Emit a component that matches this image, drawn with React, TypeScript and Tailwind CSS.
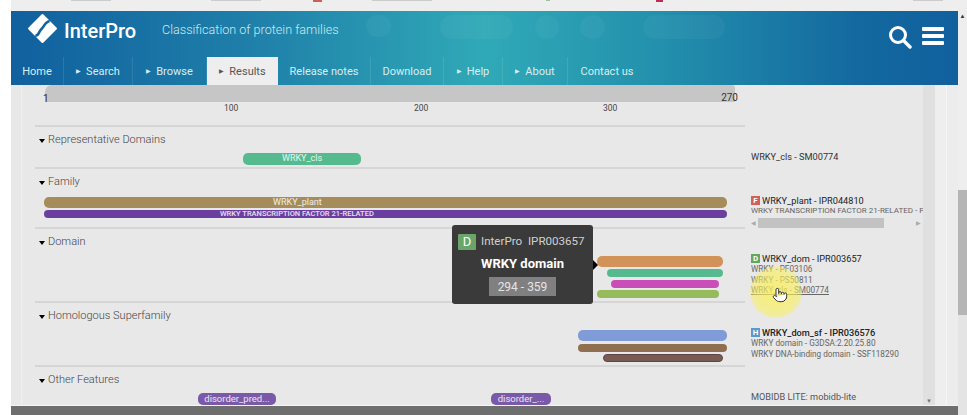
import type { ReactNode } from "react"
import { Pointer } from "lucide-react"

const sans = "font-['Roboto',sans-serif]"

function NavItem({ label, width, arrow, active }: { label: string; width: string; arrow?: boolean; active?: boolean }) {
  return (
    <div
      className={`${width} h-full pt-[2px] flex items-center justify-center gap-[5px] text-[11px] ${
        active ? "bg-[#eeeeee] text-[#555555]" : "border-r border-white/10 text-[#d6eef2]"
      }`}
    >
      {arrow && <span className="mb-[2px] text-[6px] leading-none">▶</span>}
      {label}
    </div>
  )
}

function SectionLabel({ children }: { children: ReactNode }) {
  return (
    <div className="h-[26px] pt-[1px] flex items-center pl-[4px] gap-[3px] text-[11px] font-light text-[#444444]">
      <span className="w-0 h-0 border-x-[3.5px] border-x-transparent border-t-[4px] border-t-black" />
      {children}
    </div>
  )
}

function Bar({ className, children }: { className: string; children?: ReactNode }) {
  return (
    <div className={`${className} flex items-center overflow-hidden whitespace-nowrap text-white/85`}>
      {children}
    </div>
  )
}

function Badge({ letter, color }: { letter: string; color: string }) {
  return (
    <span className={`${color} w-[9px] h-[9px] flex items-center justify-center text-[8px] font-bold leading-none text-white`}>
      {letter}
    </span>
  )
}

function SideTitle({ letter, color, children }: { letter: string; color: string; children: ReactNode }) {
  return (
    <div className="flex items-center gap-[2px] h-[11px] text-[9.2px] text-[#222222] whitespace-nowrap">
      <Badge letter={letter} color={color} />
      {children}
    </div>
  )
}

function SideLine({ children, underline }: { children: ReactNode; underline?: boolean }) {
  return (
    <div className={`h-[10.5px] leading-[10.5px] text-[8.2px] text-[#666666] whitespace-nowrap ${underline ? "underline" : ""}`}>
      {children}
    </div>
  )
}

export default function App() {
  return (
    <div className={`${sans} relative w-[967px] h-[415px] overflow-hidden bg-white`}>
      {/* browser strip */}
      <div className="h-[11px] bg-[#eeeeee] flex items-start ml-[11px]">
        <span className="ml-[60px] w-[40px] h-[1px] bg-[#cccccc]" />
        <span className="ml-[100px] w-[50px] h-[1px] bg-[#cccccc]" />
        <span className="ml-[52px] w-[9px] h-[2px] bg-[#c9605a]" />
        <span className="ml-[50px] w-[60px] h-[1px] bg-[#cccccc]" />
        <span className="ml-[114px] w-[4px] h-[1px] bg-[#9fc09f]" />
        <span className="ml-[106px] w-[7px] h-[2px] bg-[#b8305a]" />
        <span className="ml-[250px] w-[30px] h-[1px] bg-[#cccccc]" />
      </div>

      <div className="flex h-[404px]">
        <div className="w-[11px] shrink-0 bg-white" />

        <div className="w-[947px] flex flex-col">
          {/* header */}
          <header className="relative h-[74px] shrink-0 bg-[linear-gradient(90deg,#10609e_0%,#1f7fa9_25%,#30a9b7_50%,#2391ad_68%,#13689f_90%,#10609e_100%)]">
            <span className="absolute left-[355px] top-[4px] w-[25px] h-[22px] rounded-full bg-white/[0.04]" />
            <span className="absolute left-[429px] top-[4px] w-[73px] h-[24px] rounded-full bg-white/[0.04]" />
            <span className="absolute left-[524px] top-[4px] w-[24px] h-[24px] rounded-full bg-white/[0.04]" />
            <span className="absolute left-[569px] top-[4px] w-[25px] h-[24px] rounded-full bg-white/[0.04]" />
            <span className="absolute left-[632px] top-[4px] w-[82px] h-[24px] rounded-full bg-white/[0.04]" />

            <div className="h-[46px] flex items-center pl-[16px]">
              <svg width="31" height="31" viewBox="0 0 30 30" className="shrink-0 mb-[11px]">
                <path d="M15 2 L28 15 L15 28 L2 15 Z" fill="#ffffff" stroke="#ffffff" strokeWidth="2" strokeLinejoin="round" />
                <path d="M8 22 C12 22 11 18 14 15.5 C17 12.5 18 8 22 8" fill="none" stroke="#11639f" strokeWidth="2.6" />
              </svg>
              <span className="ml-[6px] mb-[7px] w-[98px] text-[20px] leading-none font-medium text-white">InterPro</span>
              <span className="mb-[7px] text-[12.6px] font-light text-[#cdeaf0]">Classification of protein families</span>
              <svg width="24" height="24" viewBox="0 0 24 24" className="ml-auto mr-[10px] mt-[5px] shrink-0">
                <circle cx="10" cy="10" r="7.5" fill="none" stroke="#ffffff" strokeWidth="3" />
                <path d="M15.5 15.5 L22 22" stroke="#ffffff" strokeWidth="3.4" strokeLinecap="round" />
              </svg>
              <div className="mr-[14px] mt-[3px] w-[22px] flex flex-col gap-[3px]">
                <span className="h-[4px] rounded-[1px] bg-white" />
                <span className="h-[4px] rounded-[1px] bg-white" />
                <span className="h-[4px] rounded-[1px] bg-white" />
              </div>
            </div>
            <nav className="h-[28px] flex">
              <NavItem label="Home" width="w-[53px]" />
              <NavItem label="Search" width="w-[69px]" arrow />
              <NavItem label="Browse" width="w-[74px]" arrow />
              <NavItem label="Results" width="w-[71px]" arrow active />
              <NavItem label="Release notes" width="w-[93px]" />
              <NavItem label="Download" width="w-[73px]" />
              <NavItem label="Help" width="w-[59px]" arrow />
              <NavItem label="About" width="w-[65px]" arrow />
              <div className="w-[78px] pt-[2px] flex items-center justify-center text-[11px] text-[#d6eef2]">Contact us</div>
            </nav>
          </header>

          {/* content */}
          <div className="relative flex-1 min-h-0 flex bg-[#e8e8e8] overflow-hidden">
            <div className="w-[11px] shrink-0 border-r border-[#f0f0f0]" />
            <div className="w-[13px] shrink-0" />

            <div className="w-[888px] shrink-0">
              {/* ruler */}
              <div className="flex h-[42px]">
                <div className="relative w-[710px] h-[42px] border-b-2 border-[#d6d6d6]">
                  <div className="ml-[10px] w-[690px] h-[17px] rounded-tl-[7px] rounded-tr-[3px] bg-[#c6c6c6]" />
                  <span className="absolute left-[8px] top-[6px] text-[10px] text-[#333333]">1</span>
                  <span className="absolute right-[7px] top-[5px] text-[10px] text-[#333333]">270</span>
                  <div className="absolute left-[189px] top-[17px] text-[8.5px] text-[#444444]">100</div>
                  <div className="absolute left-[379px] top-[17px] text-[8.5px] text-[#444444]">200</div>
                  <div className="absolute left-[568px] top-[17px] text-[8.5px] text-[#444444]">300</div>
                </div>
              </div>

              {/* Representative Domains */}
              <div className="flex h-[42px]">
                <div className="w-[710px] border-b-2 border-[#d6d6d6]">
                  <SectionLabel>Representative Domains</SectionLabel>
                  <Bar className="ml-[208px] w-[118px] h-[12px] rounded-[5px] bg-[#55bb8f] text-[9px] justify-center">WRKY_cls</Bar>
                </div>
                <div className="flex-1 pl-[6px] pt-[23px] text-[9.2px] text-[#333333]">WRKY_cls - SM00774</div>
              </div>

              {/* Family */}
              <div className="flex h-[60px]">
                <div className="w-[710px] border-b-2 border-[#d6d6d6]">
                  <SectionLabel>Family</SectionLabel>
                  <Bar className="ml-[9px] mt-[2px] w-[683px] h-[11px] pl-[229px] rounded-[5px] bg-[#a58c5a] text-[9px]">WRKY_plant</Bar>
                  <Bar className="ml-[9px] mt-[2px] w-[683px] h-[8px] pl-[176px] rounded-[4px] bg-[#6b3fa0] text-[7.5px] font-medium">
                    WRKY TRANSCRIPTION FACTOR 21-RELATED
                  </Bar>
                </div>
                <div className="flex-1 min-w-0 overflow-hidden pl-[6px] pt-[26px]">
                  <SideTitle letter="F" color="bg-[#d0605a]">WRKY_plant - IPR044810</SideTitle>
                  <div className="h-[10.5px] leading-[10.5px] text-[8px] text-[#666666] whitespace-nowrap">
                    WRKY TRANSCRIPTION FACTOR 21-RELATED - P
                  </div>
                  <div className="mt-[1px] flex items-center h-[10px] text-[6px] text-[#aaaaaa]">
                    <span className="w-[7px]">◀</span>
                    <span className="w-[126px] h-[10px] bg-[#c2c2c2]" />
                    <span className="ml-[32px]">▶</span>
                  </div>
                </div>
              </div>

              {/* Domain */}
              <div className="flex h-[74px]">
                <div className="w-[710px] border-b-2 border-[#d6d6d6]">
                  <SectionLabel>Domain</SectionLabel>
                  <Bar className="ml-[562px] mt-[1px] w-[126px] h-[11px] rounded-[5px] bg-[#d2935a]" />
                  <Bar className="ml-[572px] mt-[2px] w-[116px] h-[8px] rounded-[4px] bg-[#55bb8f]" />
                  <Bar className="ml-[576px] mt-[3px] w-[108px] h-[8px] rounded-[4px] bg-[#c94fb8]" />
                  <Bar className="ml-[562px] mt-[2px] w-[122px] h-[8px] rounded-[4px] bg-[#96bb5c]" />
                </div>
                <div className="flex-1 pl-[6px] pt-[24px]">
                  <SideTitle letter="D" color="bg-[#60a860]">WRKY_dom - IPR003657</SideTitle>
                  <SideLine>WRKY - PF03106</SideLine>
                  <SideLine>WRKY - PS50811</SideLine>
                  <SideLine underline>WRKY_cls - SM00774</SideLine>
                </div>
              </div>

              {/* Homologous Superfamily */}
              <div className="flex h-[64px]">
                <div className="w-[710px] border-b-2 border-[#d6d6d6]">
                  <SectionLabel>Homologous Superfamily</SectionLabel>
                  <Bar className="ml-[543px] mt-[1px] w-[149px] h-[11px] rounded-[5px] bg-[#7f9bd8]" />
                  <Bar className="ml-[543px] mt-[3px] w-[149px] h-[8px] rounded-[4px] bg-[#8f6f50]" />
                  <Bar className="ml-[568px] mt-[2px] w-[120px] h-[8px] rounded-[4px] bg-[#7a5a55] border border-[#5f4542]" />
                </div>
                <div className="flex-1 pl-[6px] pt-[24px]">
                  <SideTitle letter="H" color="bg-[#5a9ac8]">
                    <span className="font-medium">WRKY_dom_sf - IPR036576</span>
                  </SideTitle>
                  <SideLine>WRKY domain - G3DSA:2.20.25.80</SideLine>
                  <SideLine>WRKY DNA-binding domain - SSF118290</SideLine>
                </div>
              </div>

              {/* Other Features */}
              <div className="flex h-[38px]">
                <div className="w-[710px]">
                  <SectionLabel>Other Features</SectionLabel>
                  <div className="flex">
                    <Bar className="ml-[163px] w-[78px] h-[12px] rounded-[5px] bg-[#7a5aa8] text-[9.5px] justify-center">disorder_pred...</Bar>
                    <Bar className="ml-[215px] w-[60px] h-[12px] rounded-[5px] bg-[#7a5aa8] text-[9.5px] justify-center">disorder_...</Bar>
                  </div>
                </div>
                <div className="flex-1 pl-[6px] pt-[23px] text-[9.2px] text-[#555555]">MOBIDB LITE: mobidb-lite</div>
              </div>
            </div>

            {/* inner scrollbar and page gutter */}
            <div className="w-[12px] shrink-0 bg-[#e0e0e0] flex flex-col justify-end items-center text-[6px] text-[#777777]">▼</div>
            <div className="w-[12px] shrink-0 bg-[#eeeeee] border-r border-[#f6f6f6]" />
            <div className="flex-1 bg-[#ececec]" />

            {/* tooltip */}
            <div className="absolute left-[441px] top-[140px] w-[141px] h-[79px] rounded-[3px] bg-[#3a3a3a] flex flex-col items-center">
              <div className="w-full flex items-center pl-[6px] pt-[8px] gap-[5px] text-[11.6px] text-[#d0d0d0] whitespace-nowrap">
                <span className="w-[18px] h-[16px] flex items-center justify-center rounded-[1px] bg-[#6aa56a] text-[13px] text-white">D</span>
                <span>InterPro&nbsp; IPR003657</span>
              </div>
              <div className="mt-[5px] text-[13px] leading-[18px] font-bold text-white">WRKY domain</div>
              <div className="mt-[4px] w-[67px] h-[19px] flex items-center justify-center bg-[#808080] text-[12px] text-[#e5e5e5]">294 - 359</div>
              <span className="absolute left-full top-[35px] w-0 h-0 border-y-[5px] border-y-transparent border-l-[5px] border-l-black" />
            </div>

            {/* cursor highlight */}
            <div className="absolute left-[739px] top-[181px] w-[52px] h-[52px] rounded-full bg-[radial-gradient(circle,rgba(250,240,90,0.8)_0%,rgba(250,240,90,0.6)_55%,rgba(250,240,90,0)_100%)] flex items-center justify-center">
              <Pointer size={16} className="ml-[8px] mt-[6px] fill-white text-[#333333]" strokeWidth={1.5} />
            </div>
          </div>

          {/* bottom overlay */}
          <div className="h-[10px] shrink-0 bg-[#6e6e6e] border-t border-[#f4f4f4]" />
        </div>

        {/* page scrollbar */}
        <div className="flex-1 flex flex-col bg-[#e4e4e4]">
          <div className="h-[179px] flex justify-center text-[6px] text-[#333333] bg-[#eeeeee]">▲</div>
          <div className="h-[125px] bg-[#b5b5b5]" />
        </div>
      </div>
    </div>
  )
}
